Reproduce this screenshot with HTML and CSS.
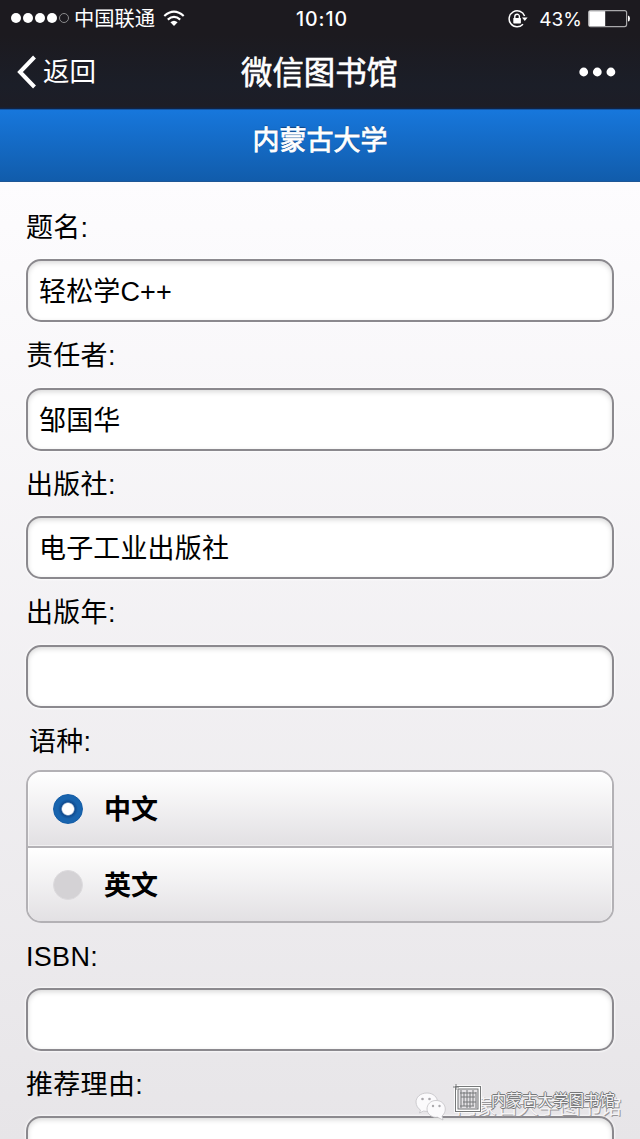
FILE: index.html
```html
<!DOCTYPE html>
<html lang="zh-CN">
<head>
    <meta charset="UTF-8">
    <meta name="viewport" content="width=device-width, initial-scale=1.0">
    <title>微信图书馆</title>
    <link rel="stylesheet" href="styles.css">
</head>
<body>
    <div class="topbar">
        <div class="status">
            <div class="status-left">
                <svg class="signal" width="60" height="12" viewBox="0 0 60 12">
                    <g fill="#fff">
                        <circle cx="6" cy="6" r="5"/>
                        <circle cx="18" cy="6" r="5"/>
                        <circle cx="30" cy="6" r="5"/>
                        <circle cx="42" cy="6" r="5"/>
                    </g>
                    <circle cx="54" cy="6" r="4.5" fill="none" stroke="#8a8a8c"/>
                </svg>
                <span class="carrier">中国联通</span>
                <svg class="wifi" width="22" height="17" viewBox="0 0 22 17">
                    <g fill="none" stroke="#fff" stroke-width="2.2">
                        <path d="M1.3 6 Q11 -2.6 20.7 6"/>
                        <path d="M4.8 9.6 Q11 4.2 17.2 9.6"/>
                    </g>
                    <path d="M7.4 12.2 Q11 9.2 14.6 12.2 L11 16 Z" fill="#fff"/>
                </svg>
            </div>
            <span class="time">10:10</span>
            <div class="status-right">
                <svg class="lock" width="20" height="18" viewBox="0 0 20 18">
                    <path d="M16.6 6 A8 8 0 1 0 15 14.3" fill="none" stroke="#fff" stroke-width="1.5"/>
                    <path d="M14 7.5 H19.6 L16.8 11 Z" fill="#fff"/>
                    <rect x="5.3" y="8" width="7.6" height="5.4" rx="0.6" fill="#fff"/>
                    <path d="M6.8 8.5 V6.5 a2.3 2.3 0 0 1 4.6 0 V8.5" fill="none" stroke="#fff" stroke-width="1.4"/>
                </svg>
                <span class="percent">43%</span>
                <svg class="battery" width="43" height="18" viewBox="0 0 43 18">
                    <rect x="0.6" y="0.6" width="38" height="16" rx="2" fill="none" stroke="#a9a9ab" stroke-width="1.2"/>
                    <rect x="1.2" y="1.2" width="16" height="14.8" fill="#fff"/>
                    <path d="M40 5.5 q2 .4 2 3 q0 2.6 -2 3 Z" fill="#fff"/>
                </svg>
            </div>
        </div>
        <div class="nav">
            <div class="back">
                <svg width="20" height="34" viewBox="0 0 20 34">
                    <path d="M17.5 2 L3 17 L17.5 32" fill="none" stroke="#fff" stroke-width="4"/>
                </svg>
                <span>返回</span>
            </div>
            <div class="nav-title">微信图书馆</div>
            <svg class="more" width="37" height="10" viewBox="0 0 37 10">
                <g fill="#fff">
                    <circle cx="4.7" cy="5" r="4.4"/>
                    <circle cx="18.3" cy="5" r="4.4"/>
                    <circle cx="31.9" cy="5" r="4.4"/>
                </g>
            </svg>
        </div>
    </div>

    <h1 class="school">内蒙古大学</h1>

    <form class="form">
        <div class="field">
            <label for="title">题名:</label>
            <input type="text" id="title" value="轻松学C++">
        </div>
        <div class="field">
            <label for="author">责任者:</label>
            <input type="text" id="author" value="邹国华">
        </div>
        <div class="field">
            <label for="publisher">出版社:</label>
            <input type="text" id="publisher" value="电子工业出版社">
        </div>
        <div class="field">
            <label for="year">出版年:</label>
            <input type="text" id="year">
        </div>
        <div class="group-label">语种:</div>
        <div class="radio-group">
            <div class="option">
                <span class="radio radio-on"></span>
                <span class="option-text">中文</span>
            </div>
            <div class="option">
                <span class="radio"></span>
                <span class="option-text">英文</span>
            </div>
        </div>
        <div class="field">
            <label for="isbn">ISBN:</label>
            <input type="text" id="isbn">
        </div>
        <div class="field">
            <label for="reason">推荐理由:</label>
            <input type="text" id="reason">
        </div>
    </form>

    <div class="watermark">
        <svg class="wechat" width="34" height="30" viewBox="0 0 34 30">
            <g fill="#fbfafc" stroke="#c3c1c5" stroke-width="0.8">
                <path d="M12 1 C5 1 1 5.5 1 10 C1 13.5 3 16.5 5.5 18 L4.500 21 L8.500 19 C15 20.500 22 17 22.500 10 C22.500 5 18 1 12 1 Z"/>
                <path d="M21 8.500 C15.500 8.500 12 12.500 12 17 C12 22 17 26 22.500 25.200 L28 28 L27 24 C33 19 30.500 8.500 21 8.500 Z"/>
            </g>
            <g fill="#aaa8ac">
                <circle cx="7.500" cy="7" r="1.300"/>
                <circle cx="14.500" cy="7" r="1.300"/>
                <circle cx="18" cy="14" r="1.200"/>
                <circle cx="24.500" cy="14" r="1.200"/>
            </g>
        </svg>
        <span class="mark-back">内蒙古大学图书馆</span>
        <svg class="seal" width="30" height="30" viewBox="0 0 30 30">
            <rect x="3" y="3" width="24" height="24" fill="#e4e2e5" stroke="#fff" stroke-width="3.5"/>
            <g fill="none" stroke="#77797a">
                <rect x="2.500" y="2.500" width="25" height="25"/>
                <rect x="5" y="5" width="20" height="20"/>
                <path d="M0 3 H6 M3 0 V6 M8 6 V24 M11 8 V22 M14 6 V24 M17 8 V24 M20 6 V22 M23 8 V24 M7 9 H23 M8 13 H22 M10 18 H23 M7 22 H21"/>
            </g>
        </svg>
        <span class="mark-front">内蒙古大学图书馆</span>
    </div>
</body>
</html>
```

FILE: styles.css
```css
* { box-sizing: border-box; }
body {
    margin: 0;
    height: 1139px;
    overflow: hidden;
    position: relative;
    font-family: "Liberation Sans", "Noto Sans CJK SC", sans-serif;
    font-size: 27px;
    color: #000;
    background: linear-gradient(#fdfcfe 182px, #e7e5e8 1139px);
}

/* phone bar */
.topbar { height: 109px; color: #fff; background: linear-gradient(#1c1a1f 35px, #1b1e28 85px, #1d1d26 107px, #0b2550); }
.status { height: 36px; display: grid; grid-template-columns: 1fr auto 1fr; align-items: center; padding: 0 10px; }
.status-left, .status-right { display: flex; align-items: center; }
.status-right { justify-content: flex-end; }
.signal { margin: 0 4px 2px 0; }
.carrier { font-size: 20.3px; line-height: 38px; }
.wifi { margin: 0 0 2px 8px; }
.time { font-family: Inter, sans-serif; font-weight: 500; font-size: 19.5px; letter-spacing: 0.9px; padding-left: 4px; }
.percent { font-family: Inter, sans-serif; font-size: 19px; margin: 0 6px 0 11px; }
.battery { margin-right: -1px; }
.nav { height: 73px; display: grid; grid-template-columns: 1fr auto 1fr; align-items: center; padding: 0 24px 0 17px; }
.back { display: flex; align-items: center; gap: 6px; font-size: 26.5px; line-height: 36px; padding-bottom: 1px; }
.nav-title { font-size: 31.4px; line-height: 40px; -webkit-text-stroke: 0.6px #fff; padding: 2px 0 0 6px; }
.more { justify-self: end; margin-bottom: 1px; }

.school {
    margin: 0;
    height: 73px;
    padding-top: 10px;
    font-size: 27px;
    line-height: 42px;
    font-weight: normal;
    text-align: center;
    color: #fff;
    -webkit-text-stroke: 0.8px #fff;
    text-shadow: 0 -1px 1px #123c70;
    background: linear-gradient(#1777dc, #115cab);
    border-top: 1px solid #1657a4;
    border-bottom: 1px solid #1e5796;
}

/* form */
.form { padding: 12px 26px 0; }
.field { height: 128.4px; }
.field label { display: block; height: 65.4px; line-height: 68px; letter-spacing: 0.3px; }
.field input {
    display: block;
    width: 100%;
    height: 63px;
    padding: 0 11px 2px;
    font: inherit;
    letter-spacing: 0.15px;
    color: #000;
    background: #fff;
    border: 2px solid #8b898e;
    border-radius: 15px;
    box-shadow: inset 0 2px 5px rgba(0, 0, 0, 0.15), 0 0 2px 1px rgba(255, 255, 255, 0.7);
}
.group-label { height: 62.4px; line-height: 68px; padding-left: 3px; letter-spacing: 0.3px; }
.radio-group { height: 152.6px; border: 2px solid #b3b1b5; border-radius: 15px; overflow: hidden; }
.option {
    height: 74px;
    display: flex;
    align-items: center;
    gap: 21px;
    padding-left: 25px;
    font-weight: bold;
    background: linear-gradient(#fff, #e2e0e3);
    box-shadow: inset 0 0 0 1px rgba(255, 255, 255, 0.5);
}
.option + .option { height: 76px; border-top: 2px solid #b3b1b5; }
.option-text { padding-bottom: 3px; }
.radio { width: 30px; height: 30px; border: 1px solid #dddbde; border-radius: 50%; background: #d4d2d5; }
.radio-on { border-color: #135ca6; background: radial-gradient(circle, #fff 5.5px, #104c90 7px, #1864ae 10px); }

/* stamp over the last field */
.watermark { position: absolute; left: 414px; top: 1084px; width: 226px; height: 40px; }
.wechat { position: absolute; left: 1px; top: 8px; }
.seal { position: absolute; left: 39px; top: 0; }
.mark-back, .mark-front { position: absolute; white-space: nowrap; color: #f4f3f5; }
.mark-back {
    left: 42px;
    top: 8px;
    font-size: 20.7px;
    line-height: 30px;
    text-shadow: 1px 1px 0 #989699;
}
.mark-front {
    left: 77px;
    top: 2px;
    font-size: 15.5px;
    line-height: 30px;
    text-shadow: 1px 0 0 #77797a, -1px 0 0 #77797a, 0 1px 0 #77797a, 0 -1px 0 #77797a;
}
```
